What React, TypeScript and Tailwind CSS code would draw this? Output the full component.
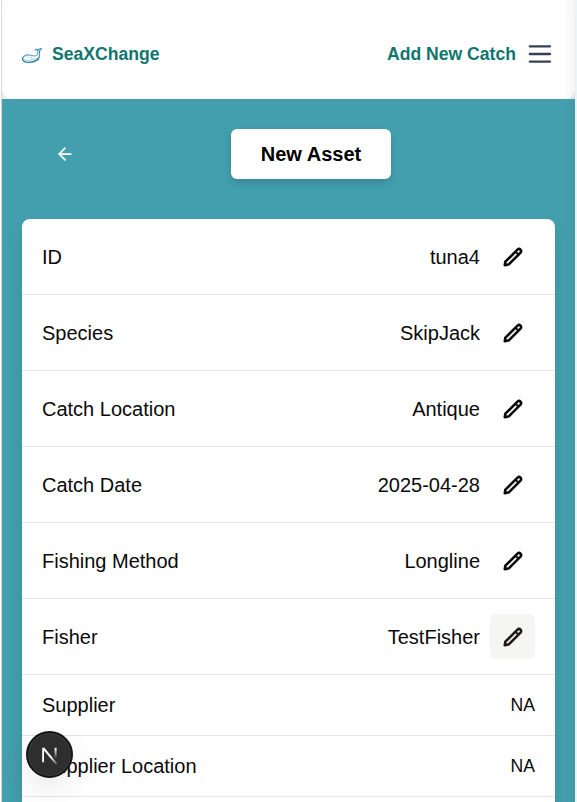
import React from "react";
import { ArrowLeft } from "lucide-react";

type Row = { label: string; value: string; editable?: boolean; active?: boolean };

const rows: Row[] = [
  { label: "ID", value: "tuna4", editable: true },
  { label: "Species", value: "SkipJack", editable: true },
  { label: "Catch Location", value: "Antique", editable: true },
  { label: "Catch Date", value: "2025-04-28", editable: true },
  { label: "Fishing Method", value: "Longline", editable: true },
  { label: "Fisher", value: "TestFisher", editable: true, active: true },
  { label: "Supplier", value: "NA" },
  { label: "Supplier Location", value: "NA" },
];

function WhaleLogo() {
  return (
    <svg width="22" height="20" viewBox="0 0 22 20" fill="none" strokeLinecap="round" strokeLinejoin="round">
      <path d="M1.5 14.2C3 11.4 6.6 10.4 10 11.2C12.4 12 14.8 12.6 16 11C17 9.4 16.8 7.6 17.2 6" stroke="#5b9fc0" strokeWidth="1.1" />
      <path d="M14 6.2C15 5 16.2 5.2 17.2 6C17.8 4.8 19 4.4 20.4 4.2C20.2 5.8 19.6 6.6 18.4 7C19 11 18.8 14 16 16.4" stroke="#3f8fb5" strokeWidth="1.1" />
      <path d="M1.5 14.2C1.2 17 4 18.6 8 18.4C12 18.2 15.4 17 17.6 14.2" stroke="#2c7fa9" strokeWidth="1.4" />
      <path d="M2.5 15.4C6 16.9 10.5 16.8 14.5 14.4M6 12.8L7 13.6M9 13L11 14.2" stroke="#8dbdd5" strokeWidth="0.9" />
    </svg>
  );
}

function MenuIcon() {
  return (
    <svg width="24" height="20" viewBox="0 0 24 20" stroke="#374151" strokeWidth="2.3" strokeLinecap="round">
      <path d="M1.8 2.4H22M1.8 10H22M1.8 17.6H22" />
    </svg>
  );
}

function PencilIcon() {
  return (
    <svg width="20" height="20" viewBox="0 0 20 20" fill="none" stroke="currentColor" strokeWidth="2.6" strokeLinecap="round" strokeLinejoin="round">
      <path d="M14.5 2.7a2.12 2.12 0 0 1 3 3L6.3 16.9Q5.8 17.4 5.1 17.6L1.8 18.3L2.3 15Q2.4 14.5 2.9 14.2Z" />
      <path d="M12.8 5L15.2 7.4" strokeWidth="2" />
    </svg>
  );
}

function Header() {
  return (
    <header className="mt-2 flex h-[91px] items-center justify-between rounded-[10px] bg-white pt-px pr-[23px] pl-[19px] text-[17.6px] font-bold text-[#0f766e]">
      <div className="flex items-center gap-[9px]">
        <WhaleLogo />
        <span>SeaXChange</span>
      </div>
      <div className="flex items-center gap-3">
        <span>Add New Catch</span>
        <MenuIcon />
      </div>
    </header>
  );
}

function AssetRow({ label, value, editable, active }: Row) {
  return (
    <li className={`flex shrink-0 items-center justify-between border-b border-[#e5e5e5] px-5 ${editable ? "h-[76px]" : "h-[61px]"}`}>
      <span className="text-[20px]">{label}</span>
      {editable ? (
        <div className="flex items-center gap-[10px]">
          <span className="text-[20px]">{value}</span>
          <button className={`flex size-[45px] items-center justify-center rounded-[6px] ${active ? "bg-[#f5f5f4] text-[#1c1917]" : "text-[#0a0a0a]"}`}>
            <PencilIcon />
          </button>
        </div>
      ) : (
        <span className="text-[17.6px]">{value}</span>
      )}
    </li>
  );
}

function DevBadge() {
  return (
    <div className="absolute top-[731px] left-[25px] flex size-[47px] items-center justify-center rounded-full border-2 border-[#151515] bg-[#2e2e2e] shadow-[0_12px_32px_-4px_rgba(0,0,0,0.12)] ring-1 ring-[#555]/40 ring-inset">
      <svg width="20" height="20" viewBox="0 0 20 20" fill="none">
        <defs>
          <linearGradient id="diagonal" x1="11" y1="11.5" x2="18" y2="20" gradientUnits="userSpaceOnUse">
            <stop stopColor="#fff" />
            <stop offset="1" stopColor="#fff" stopOpacity="0.1" />
          </linearGradient>
          <linearGradient id="stem" x1="16" y1="3" x2="16" y2="14" gradientUnits="userSpaceOnUse">
            <stop stopColor="#fff" />
            <stop offset="1" stopColor="#fff" stopOpacity="0" />
          </linearGradient>
        </defs>
        <path d="M2.2 2.8H4.4L17.4 18.6L15.8 19.6L4 5.4V17.2H2.2Z" fill="url(#diagonal)" />
        <path d="M15.6 2.8V13.5" stroke="url(#stem)" strokeWidth="2" />
      </svg>
    </div>
  );
}

export default function App() {
  return (
    <div className="relative flex h-[802px] w-[577px] overflow-hidden border-r-2 border-l border-r-[#e9f6f7] border-l-white bg-[#439fae] font-['Liberation_Sans',Arial,sans-serif] text-[#0a0a0a]">
      <div className="w-px shrink-0 bg-[#d3dae1]" />
      <div className="flex min-w-0 flex-1 flex-col bg-[#439fae]">
        <div className="flex h-[99px] shrink-0 flex-col bg-linear-to-b from-[#fefefe] from-20% to-[#ececec]">
          <Header />
        </div>
        <main className="flex min-h-0 flex-1 flex-col px-5 pt-[30px]">
          <div className="flex h-[50px] shrink-0 items-center">
            <ArrowLeft className="ml-[33px] text-white" size={20} strokeWidth={2.1} />
            <h1 className="ml-[156px] flex h-[50px] w-[160px] items-center justify-center rounded-md bg-white text-[20px] font-bold text-black shadow-[0_4px_8px_rgba(0,0,0,0.15)]">
              New Asset
            </h1>
          </div>
          <ul className="mt-[40px] flex flex-1 flex-col overflow-hidden rounded-t-[8px] bg-white shadow-[0_10px_15px_rgba(0,0,0,0.1)]">
            {rows.map((row) => (
              <AssetRow key={row.label} {...row} />
            ))}
          </ul>
        </main>
      </div>
      <div className="pointer-events-none absolute top-0 right-0 h-full w-[12px] bg-linear-to-r from-transparent to-black/4" />
      <DevBadge />
    </div>
  );
}
